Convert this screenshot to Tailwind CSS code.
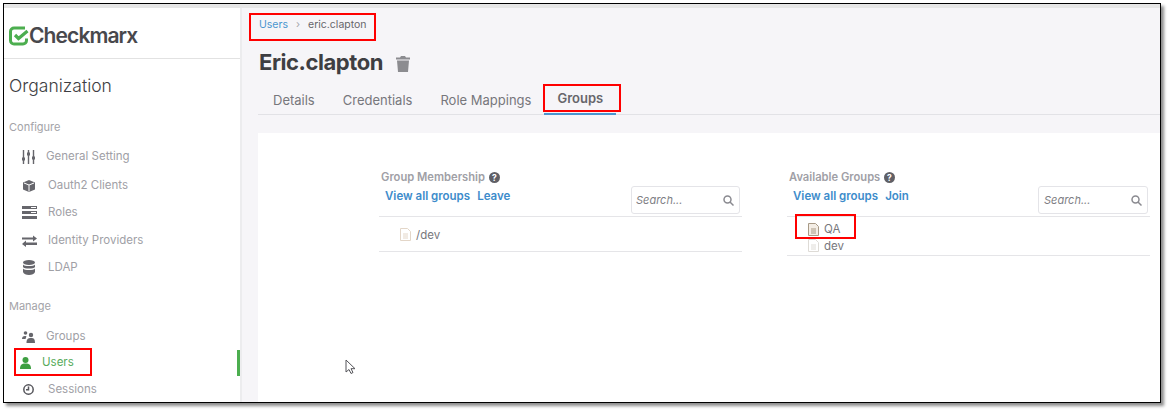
<!DOCTYPE html>
<html lang="en">
<head>
<meta charset="UTF-8" />
<title>Users - eric.clapton</title>
<script src="https://cdn.jsdelivr.net/npm/@tailwindcss/browser@4"></script>
</head>
<body class="bg-white overflow-hidden font-['Inter',sans-serif]">

<div class="w-[1170px] h-[412px] pl-[3px] pt-[3px]">
  <!-- Frame -->
  <div class="relative w-[1158px] h-[400px] border border-black bg-white shadow-[3px_3px_3px_rgba(0,0,0,0.45)] overflow-hidden flex flex-col">
    <div class="h-[4px] bg-[#e6e6e6] shrink-0"></div>
    <div class="flex flex-1 min-h-0">

      <!-- Sidebar -->
      <aside class="w-[238px] shrink-0 bg-white border-r-[2px] border-[#ececee] relative">
        <div class="h-[51px] border-b border-[#e2e2e2] flex items-center pl-[5px] pt-[5px]">
          <svg width="20" height="20" viewBox="0 0 20 20" fill="none" class="shrink-0">
            <path d="M17.500 12.500v2a3.500 3.500 0 0 1-3.500 3.500H5a3.500 3.500 0 0 1-3.500-3.500V5.500A3.500 3.500 0 0 1 5 2h11" stroke="#4cae4f" stroke-width="3"/>
            <path d="M6 9l3.500 3.500L18.500 5" stroke="#4cae4f" stroke-width="3.200"/>
          </svg>
          <span class="text-[21px] font-semibold tracking-[-0.9px] text-[#48484c]">Checkmarx</span>
        </div>
        <h2 class="text-[17.5px] leading-[24px] text-[#3d3d42] font-light pl-[5px] mt-[15px]">Organization</h2>
        <p class="text-[11px] leading-[14px] text-[#a3a3a8] pl-[5px] mt-[22px]">Configure</p>
        <ul class="text-[11.5px] text-[#a0a0a6] mt-[9px]">
          <li class="h-[28px] flex items-center pl-[17px]">
            <svg width="15" height="14" viewBox="0 0 15 14" class="mr-[10px]" stroke="#66666c" stroke-width="1.400">
              <path d="M2.500 0v14M7.500 0v14M12.500 0v14"/><path d="M1 9h3M6 4h3M11 8h3" stroke-width="2.800"/>
            </svg>General Setting</li>
          <li class="h-[28px] flex items-center pl-[18px] pt-[1px]">
            <svg width="14" height="14" viewBox="0 0 14 14" class="mr-[12px]">
              <path d="M7 1l6 2.500v7L7 13l-6-2.500v-7z" fill="#66666c"/><path d="M2 4l5 2 5-2M7 6v6.500" stroke="#fff" fill="none"/>
            </svg>Oauth2 Clients</li>
          <li class="h-[27px] flex items-center pl-[18px]">
            <svg width="15" height="13" viewBox="0 0 15 13" class="mr-[11px]" fill="#66666c">
              <rect width="15" height="3"/><rect y="5" width="15" height="3"/><rect y="10" width="15" height="3"/><rect x="9" y="1" width="5" height="1" fill="#fff"/><rect x="9" y="6" width="5" height="1" fill="#fff"/>
            </svg>Roles</li>
          <li class="h-[28px] flex items-center pl-[18px] pt-[1px]">
            <svg width="15" height="12" viewBox="0 0 15 12" class="mr-[11px]" fill="#66666c">
              <path d="M0 2.500h11V.5L15 3.500l-4 3V4.500H0zM15 7.500H4v-2l-4 3.500 4 3v-2h11z"/>
            </svg>Identity Providers</li>
          <li class="h-[27px] flex items-center pl-[19px]">
            <svg width="12" height="15" viewBox="0 0 12 15" class="mr-[13px]" fill="#66666c">
              <ellipse cx="6" cy="2.500" rx="6" ry="2.500"/><path d="M0 4.500c1 2 11 2 12 0V7c-1 2-11 2-12 0zM0 8.500c1 2 11 2 12 0V12c-1 4-11 4-12 0z"/>
            </svg>LDAP</li>
        </ul>
        <p class="text-[11px] leading-[14px] text-[#a3a3a8] pl-[5px] mt-[18px]">Manage</p>
        <ul class="text-[11.5px] text-[#a0a0a6] mt-[10px]">
          <li class="h-[27px] flex items-center pl-[18px]">
            <svg width="13" height="12" viewBox="0 0 13 12" class="mr-[11px]" fill="#66666c">
              <circle cx="3.500" cy="2" r="1.800"/><circle cx="9" cy="4" r="2.200"/><path d="M0 8c0-2 1-3 3-3 1 0 1.500.3 1.500.3L3.500 8zM4.500 12c0-4 1.500-5 4.500-5s4 1 4 5z"/>
            </svg>Groups</li>
          <li class="h-[26px] flex items-center pl-[16px] text-[#57ab5b]">
            <svg width="11" height="12" viewBox="0 0 11 12" class="mr-[11px]" fill="#3d9f41">
              <circle cx="5.500" cy="3" r="3"/><path d="M0 12c0-4 1.500-5.500 5.500-5.500S11 8 11 12z"/>
            </svg>Users</li>
          <li class="h-[27px] flex items-center pl-[19px]">
            <svg width="11" height="11" viewBox="0 0 11 11" class="mr-[14px]" fill="none" stroke="#55555b" stroke-width="1.500">
              <circle cx="5.500" cy="5.500" r="4.700"/><path d="M5.500 2.500v3.200H3"/>
            </svg>Sessions</li>
        </ul>
        <div class="absolute right-0 top-[342px] w-[3px] h-[26px] bg-[#4cae4f]"></div>
      </aside>

      <!-- Main -->
      <main class="flex-1 min-w-0 bg-[#f6f5f8] flex flex-col">
        <div class="pl-[17px] pt-[10px] h-[22px] text-[10.5px] leading-[13px] flex items-start">
          <a class="text-[#4a95cf]">Users</a>
          <span class="text-[#a5a5aa] mx-[8px]">›</span>
          <span class="text-[#66666b]">eric.clapton</span>
        </div>
        <div class="pl-[17px] mt-[16px] flex items-center h-[32px]">
          <h1 class="text-[22px] font-bold text-[#3e3e42] tracking-[-0.45px]">Eric.clapton</h1>
          <svg width="14" height="16" viewBox="0 0 14 16" fill="#8c8c90" class="ml-[13px] mt-[3px]">
            <path d="M5 0h4l1 1.500h4V3.500H0V1.500h4zM1 4.500h12L12 16H2z"/>
          </svg>
        </div>
        <nav class="ml-[16px] mt-[7px] h-[30px] border-b border-[#e2e2e6] flex text-[13px] text-[#77777c] shrink-0">
          <a class="pl-[15px] pr-[14px] pt-[6px]">Details</a>
          <a class="pl-[14px] pr-[14px] pt-[6px]">Credentials</a>
          <a class="pl-[14px] pr-[13px] pt-[6px]">Role Mappings</a>
          <a class="relative px-[13px] pt-[4px] font-semibold text-[#66666b]">Groups
            <span class="absolute left-0 right-0 bottom-[-1px] h-[2px] bg-[#4a95cf]"></span>
          </a>
        </nav>

        <section class="flex-1 bg-white ml-[16px] mt-[18px] pt-[37px] flex">
          <!-- Group Membership -->
          <div class="ml-[121px] w-[363px]">
            <div class="pl-[2px] flex items-center text-[11.2px] leading-[14px] font-semibold text-[#a0a0a6]">Group Membership
              <svg width="11" height="11" viewBox="0 0 11 11" class="ml-[4px]"><circle cx="5.500" cy="5.500" r="5.500" fill="#606066"/><text x="5.500" y="8.700" text-anchor="middle" font-size="8.500" font-weight="700" fill="#fff" font-family="Inter">?</text></svg>
            </div>
            <div class="h-[33px] border-b border-[#e5e5e8] flex justify-between pl-[6px] pr-[2px]">
              <div class="text-[11.5px] leading-[14px] font-semibold text-[#3d8ccb] pt-[5px]">
                <a>View all groups</a><a class="ml-[7px]">Leave</a>
              </div>
              <div class="w-[109px] h-[28px] mt-[2px] border border-[#e4e4e8] rounded-[3px] flex items-center justify-between pl-[4px] pr-[5px] pt-[1px] text-[11px] italic text-[#7e7e84] bg-white">Search...
                <svg width="11" height="11" viewBox="0 0 11 11" fill="none" stroke="#8a8a90" stroke-width="1.500"><circle cx="4.500" cy="4.500" r="3.500"/><path d="M7 7l3.500 3.500"/></svg>
              </div>
            </div>
            <div class="h-[35px] border-b border-[#e5e5e8] flex items-center pl-[21px] pt-[3px] text-[11.5px] text-[#77777c]">
              <svg width="11" height="13" viewBox="0 0 11 13" fill="none" stroke="#e3d6c8" class="mr-[5px] mb-[2px]"><path d="M.5.500h7l3 3v9H.5zM3 6h5M3 8h5M3 10h5"/></svg>/dev
            </div>
          </div>
          <!-- Available Groups -->
          <div class="ml-[45px] w-[363px]">
            <div class="pl-[2px] flex items-center text-[11.2px] leading-[14px] font-semibold text-[#a0a0a6]">Available Groups
              <svg width="11" height="11" viewBox="0 0 11 11" class="ml-[4px]"><circle cx="5.500" cy="5.500" r="5.500" fill="#606066"/><text x="5.500" y="8.700" text-anchor="middle" font-size="8.500" font-weight="700" fill="#fff" font-family="Inter">?</text></svg>
            </div>
            <div class="h-[33px] border-b border-[#e5e5e8] flex justify-between pl-[6px] pr-[2px]">
              <div class="text-[11.5px] leading-[14px] font-semibold text-[#3d8ccb] pt-[5px]">
                <a>View all groups</a><a class="ml-[7px]">Join</a>
              </div>
              <div class="w-[110px] h-[28px] mt-[2px] border border-[#e4e4e8] rounded-[3px] flex items-center justify-between pl-[5px] pr-[5px] pt-[1px] text-[11px] italic text-[#7e7e84] bg-white">Search...
                <svg width="11" height="11" viewBox="0 0 11 11" fill="none" stroke="#8a8a90" stroke-width="1.500"><circle cx="4.500" cy="4.500" r="3.500"/><path d="M7 7l3.500 3.500"/></svg>
              </div>
            </div>
            <div class="h-[39px] border-b border-[#e5e5e8] pl-[21px] pt-[5px] text-[11.5px] text-[#77777c]">
              <div class="h-[16px] flex items-center">
                <svg width="11" height="13" viewBox="0 0 11 13" fill="#f4eee6" stroke="#a89a86" class="mr-[5px] mb-[2px]"><path d="M.5.500h7l3 3v9H.5zM3 6h5M3 8h5M3 10h5"/></svg>QA
              </div>
              <div class="h-[17px] flex items-center">
                <svg width="11" height="13" viewBox="0 0 11 13" fill="none" stroke="#dedbd6" class="mr-[5px] mb-[2px]"><path d="M.5.500h7l3 3v9H.5zM3 6h5M3 8h5M3 10h5"/></svg>dev
              </div>
            </div>
          </div>
        </section>
      </main>
    </div>

    <!-- Red annotation boxes -->
    <div class="absolute left-[245px] top-[9px] w-[127px] h-[28px] border-[2px] border-[#ff0000]"></div>
    <div class="absolute left-[539px] top-[80px] w-[78px] h-[28px] border-[2px] border-[#ff0000]"></div>
    <div class="absolute left-[791px] top-[210px] w-[61px] h-[25px] border-[2px] border-[#ff0000]"></div>
    <div class="absolute left-[10px] top-[344px] w-[78px] h-[28px] border-[2px] border-[#ff0000]"></div>

    <!-- Mouse cursor -->
    <svg class="absolute left-[341px] top-[355px]" width="12" height="16" viewBox="0 0 12 16" fill="#fff" stroke="#55555a">
      <path d="M1 1v12l3-2.500 2 4 2-1-2-3.800h4z"/>
    </svg>
  </div>
</div>

</body>
</html>
